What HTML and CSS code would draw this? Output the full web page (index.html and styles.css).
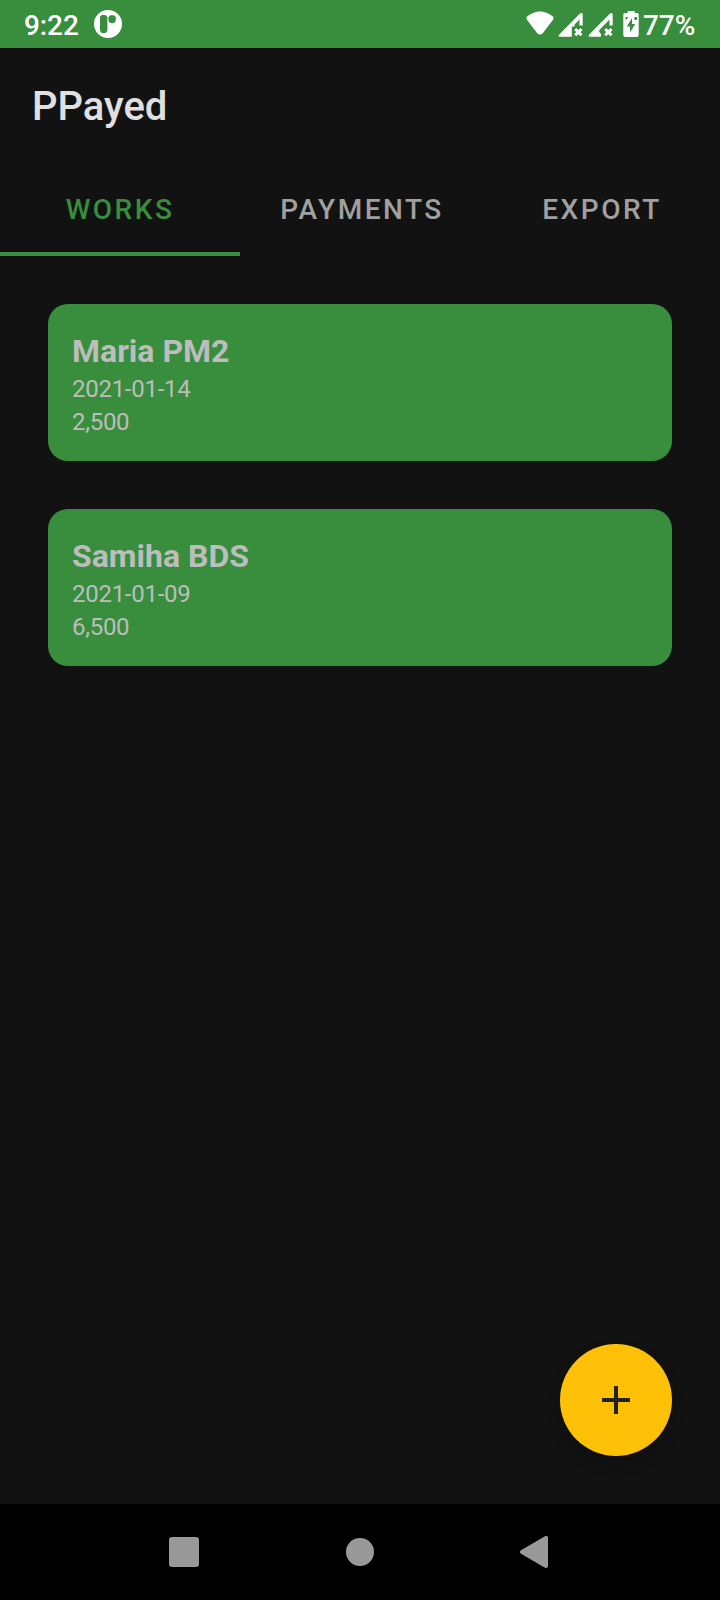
FILE: index.html
```html
<!DOCTYPE html>
<html lang="en">
<head>
<meta charset="utf-8">
<title>PPayed</title>
<link rel="stylesheet" href="styles.css">
</head>
<body>
<div class="screen">
  <div class="status">
    <span class="clock">9:22</span>
    <svg class="notice" viewBox="0 0 28 28"><path fill="#fff" fill-rule="evenodd" d="M14 0a14 14 0 1 1 0 28a14 14 0 1 1 0-28zM10 5H8.600Q6 5 6 8V19.500a3.700 3.700 0 0 0 7.400 0V8Q13.400 5 10 5zM17 5.200a3 3 0 0 0-2.600 3v1.300a3.600 3.600 0 0 0 7.400 0V8a2.800 2.800 0 0 0-2.800-2.800z"/></svg>
    <svg class="signals" viewBox="0 0 116 28" fill="#fff">
      <path d="M1.200 10Q-.4 7.600 1.400 6.200Q14-3.400 26.600 6.200Q28.400 7.600 26.800 10L17.200 22.700Q14 26.500 10.800 22.700z"/>
      <path d="M34 26.800Q31.500 26.800 33.300 24.600L54 3.600Q56.700 1.800 56.700 4.700V15.500H53.500V9.500L48.500 14.500V16.500H45.800V26.800z"/>
      <path d="M64 26.800Q61.500 26.800 63.300 24.600L84 3.600Q86.700 1.800 86.700 4.700V15.500H83.500V9.500L73.800 19.500Q72 21.500 74.900 23.800V26.800z"/>
      <path fill="none" stroke="#fff" stroke-width="3" d="M49.200 19l6.300 6.300m0-6.300l-6.300 6.300M79.200 19l6.300 6.300m0-6.300l-6.300 6.300"/>
      <path fill-rule="evenodd" d="M101.700 1h7v2h2.500q1.500 0 1.500 1.500V25q0 2-2 2H99.300q-2 0-2-2V4.500Q97.300 3 98.800 3h2.900zM99.500 7v3.500l3-3.500zM111 7h-2.500v3h2.500zM106 8l-5.200 8.500h3.200v6l5.200-8.500h-3.200z"/>
    </svg>
    <span class="battery">77%</span>
  </div>
  <header class="appbar">PPayed</header>
  <nav class="tabs">
    <div class="tab active">WORKS</div>
    <div class="tab">PAYMENTS</div>
    <div class="tab">EXPORT</div>
  </nav>
  <main class="list">
    <article class="card">
      <div class="name">Maria PM2</div>
      <div class="detail">2021-01-14</div>
      <div class="detail">2,500</div>
    </article>
    <article class="card">
      <div class="name">Samiha BDS</div>
      <div class="detail">2021-01-09</div>
      <div class="detail">6,500</div>
    </article>
    <div class="fab"><svg width="28" height="28" viewBox="0 0 28 28"><path d="M12 0h4v12h12v4H16v12h-4V16H0v-4h12z" fill="#212121"/></svg></div>
  </main>
  <footer class="sysnav">
    <svg width="30" height="30"><rect width="30" height="30" rx="3" fill="#999"/></svg>
    <svg width="28" height="28"><circle cx="14" cy="14" r="14" fill="#999"/></svg>
    <svg width="28" height="32" viewBox="0 0 28 32"><path d="M2 16L26 2V30z" fill="#999" stroke="#999" stroke-width="4" stroke-linejoin="round"/></svg>
  </footer>
</div>
</body>
</html>
```
FILE: styles.css
```css
* { box-sizing: border-box; }
body { margin: 0; background: #121212; font-family: Roboto, "Liberation Sans", sans-serif; }
svg { display: block; flex: none; }
.screen { width: 720px; height: 1600px; display: flex; flex-direction: column; background: #121212; overflow: hidden; }
.status { height: 48px; flex: none; display: flex; align-items: center; padding: 0 24.600px 0 24px; background: #388e3c; color: #fff; font-size: 28px; font-weight: 500; line-height: 44px; }
.clock, .battery { padding-top: 4px; }
.clock { letter-spacing: -0.1px; }
.notice { width: 28px; height: 28px; margin-left: 15px; }
.signals { width: 116px; height: 28px; margin-left: auto; margin-right: 1.4px; }
.appbar { height: 112px; flex: none; padding-left: 32px; color: #e0e0e0; font-size: 40px; font-weight: 500; line-height: 118px; }
.tabs { height: 96px; flex: none; display: grid; grid-template: 96px / repeat(3, 1fr); }
.tab { border-bottom: 4px solid transparent; color: #a0a0a0; font-size: 28px; font-weight: 500; line-height: 100px; letter-spacing: 2.5px; text-align: center; }
.tab:not(.active) { padding-left: 4px; }
.tab.active { color: #388e3c; border-bottom-color: #388e3c; }
.list { position: relative; flex: 1; display: flex; flex-direction: column; gap: 48px; padding: 48px; }
.card { height: 157px; padding: 28px 24px 0; border-radius: 20px; background: #388e3c; color: #bdbdbd; }
.name { margin-bottom: 3px; font-size: 32px; font-weight: 700; line-height: 38px; }
.detail { font-size: 24px; line-height: 33px; letter-spacing: -0.27px; }
.fab { position: absolute; right: 48px; bottom: 48px; width: 112px; height: 112px; border-radius: 50%; display: grid; place-items: center; background: #ffc107; box-shadow: 0 8px 16px rgba(0, 0, 0, .18); }
.sysnav { height: 96px; flex: none; display: flex; align-items: center; justify-content: space-between; padding: 0 172px 0 169px; background: #000; }
```
